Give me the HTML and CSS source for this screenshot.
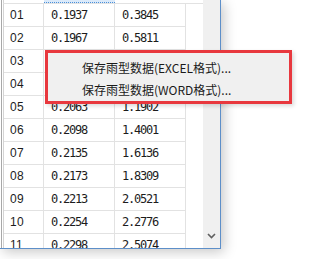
FILE: index.html
```html
<!DOCTYPE html>
<html lang="zh-CN">
<head>
    <meta charset="UTF-8">
    <title>雨型数据</title>
    <link rel="stylesheet" href="styles.css">
</head>
<body>
    <div class="window">
        <div class="grid">
            <div class="top-strip"><span class="focus-cell"></span></div>
            <div class="row"><span>01</span><span>0.1937</span><span>0.3845</span></div>
            <div class="row"><span>02</span><span>0.1967</span><span>0.5811</span></div>
            <div class="row"><span>03</span><span>0.1997</span><span>0.7808</span></div>
            <div class="row"><span>04</span><span>0.2029</span><span>0.9837</span></div>
            <div class="row"><span>05</span><span>0.2063</span><span>1.1902</span></div>
            <div class="row"><span>06</span><span>0.2098</span><span>1.4001</span></div>
            <div class="row"><span>07</span><span>0.2135</span><span>1.6136</span></div>
            <div class="row"><span>08</span><span>0.2173</span><span>1.8309</span></div>
            <div class="row"><span>09</span><span>0.2213</span><span>2.0521</span></div>
            <div class="row"><span>10</span><span>0.2254</span><span>2.2776</span></div>
            <div class="row"><span>11</span><span>0.2298</span><span>2.5074</span></div>
        </div>
        <div class="scrollbar">
            <svg class="chev" width="9" height="6" viewBox="0 0 9 6"><path d="M1 1 L4.5 4.5 L8 1" fill="none" stroke="#606060" stroke-width="1.6"/></svg>
        </div>
    </div>

    <div class="menu">
        <div class="menu-item">保存雨型数据(EXCEL格式)...</div>
        <div class="menu-item">保存雨型数据(WORD格式)...</div>
    </div>
</body>
</html>
```

FILE: styles.css
```css
* { box-sizing: border-box; }
body { margin: 0; background: #ffffff; width: 325px; height: 259px; overflow: hidden; position: relative; }
.window { display: flex; width: 221px; height: 249px; background: #ffffff; border-right: 1px solid #5d8fc9; border-bottom: 1px solid #5d8fc9; box-shadow: 3px 3px 12px rgba(0, 0, 0, 0.22); }
.grid { flex: 1; margin-left: 1px; border-left: 1px solid #a8a8a8; padding-left: 1px; overflow: hidden; }
.top-strip { height: 4px; border-left: 1px solid #d4d4d4; border-bottom: 1px solid #e2e2e2; padding-left: 40px; }
.focus-cell { display: block; width: 71px; height: 3px; background: #dbeafa; border-bottom: 1px dotted #4a8fd8; }
.row { display: grid; grid-template-columns: 40px 71px 71px; height: 23px; border-left: 1px solid #d4d4d4; }
.row span { display: flex; align-items: center; padding-left: 7px; border-bottom: 1px solid #e2e2e2; border-right: 1px solid #e2e2e2; font-family: "DejaVu Sans Mono", monospace; font-size: 12px; letter-spacing: -1.2px; color: #1c1c1c; }
.row span:first-child { padding-left: 6px; font-family: "Liberation Sans", sans-serif; font-size: 12px; letter-spacing: 0.3px; }
.scrollbar { width: 17px; background: #f0f0f0; display: flex; align-items: flex-end; justify-content: center; padding-bottom: 9px; }
.chev { display: block; }
.menu { position: absolute; left: 45px; top: 50px; width: 247px; height: 54px; border: 3px solid #e8383e; background: #f0f0f0; padding: 4px 0 0 34px; box-shadow: 2px 2px 4px rgba(0, 0, 0, 0.15); }
.menu-item { height: 22px; line-height: 22px; font-family: "Noto Sans CJK SC", "Microsoft YaHei", sans-serif; font-size: 12px; color: #1a1a1a; white-space: nowrap; }
```
